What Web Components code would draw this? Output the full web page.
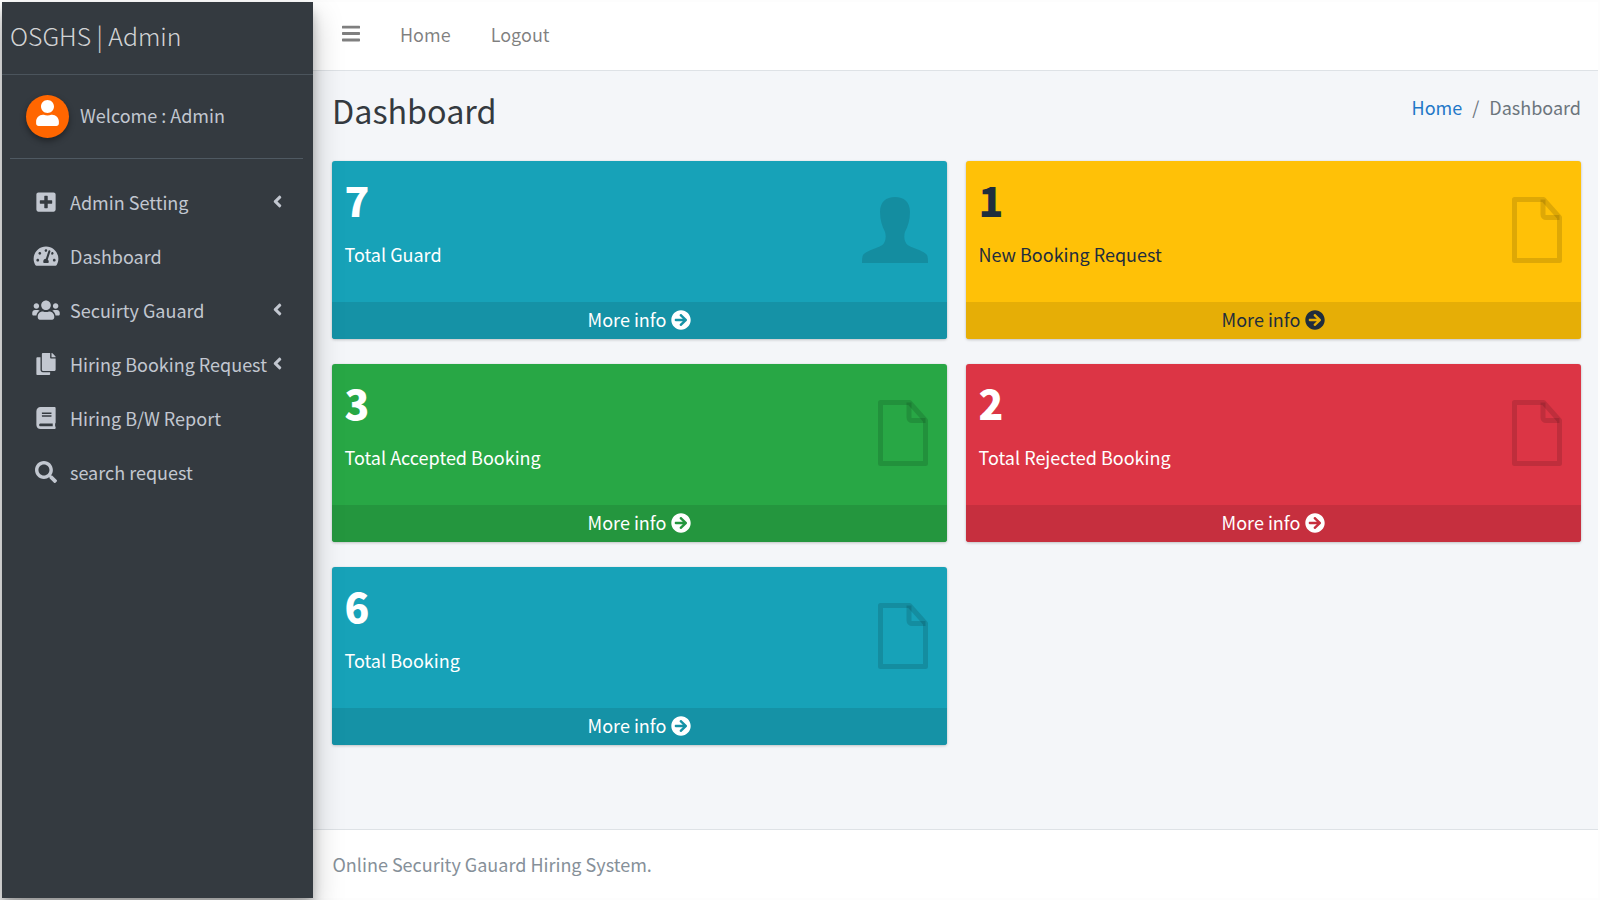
<!DOCTYPE html>
<html lang="en"><head><meta charset="utf-8"><title>OSGHS | Admin</title>
<style>
html,body{margin:0;height:100%;background:#fdfdfd;}
body{font-family:"Noto Sans CJK JP","Liberation Sans",sans-serif;overflow:hidden;}
app-shell{height:900px;}
</style></head>
<body>
<app-shell>
  <side-bar slot="side" brand="OSGHS | Admin" user="Welcome : Admin">
    <menu-item icon="plus" arrow>Admin Setting</menu-item>
    <menu-item icon="gauge">Dashboard</menu-item>
    <menu-item icon="users" arrow>Secuirty Gauard</menu-item>
    <menu-item icon="copy" arrow>Hiring Booking Request</menu-item>
    <menu-item icon="book">Hiring B/W Report</menu-item>
    <menu-item icon="search">search request</menu-item>
  </side-bar>
  <top-bar slot="top"></top-bar>
  <page-head slot="head"></page-head>
  <stat-box slot="cards" value="7" label="Total Guard" bg="#17a2b8" foot="#1592a6" glyph="person"></stat-box>
  <stat-box slot="cards" value="1" label="New Booking Request" bg="#ffc107" foot="#e6ae06" fg="#1f2d3d" glyph="doc"></stat-box>
  <stat-box slot="cards" value="3" label="Total Accepted Booking" bg="#28a745" foot="#24963e" glyph="doc"></stat-box>
  <stat-box slot="cards" value="2" label="Total Rejected Booking" bg="#dc3545" foot="#c62f3e" glyph="doc"></stat-box>
  <stat-box slot="cards" value="6" label="Total Booking" bg="#17a2b8" foot="#1592a6" glyph="doc"></stat-box>
  <page-foot slot="foot">Online Security Gauard Hiring System.</page-foot>
</app-shell>
<script>
const P={
 plus:['0 0 448 512','M400 32H48C21.5 32 0 53.5 0 80v352c0 26.5 21.5 48 48 48h352c26.5 0 48-21.5 48-48V80c0-26.5-21.5-48-48-48zm-32 252c0 6.6-5.4 12-12 12h-92v92c0 6.6-5.4 12-12 12h-56c-6.6 0-12-5.4-12-12v-92H92c-6.6 0-12-5.4-12-12v-56c0-6.6 5.4-12 12-12h92v-92c0-6.6 5.4-12 12-12h56c6.6 0 12 5.4 12 12v92h92c6.6 0 12 5.4 12 12v56z'],
 gauge:['0 0 576 512','M288 32C128.94 32 0 160.94 0 320c0 52.8 14.25 102.26 39.06 144.8 5.61 9.62 16.3 15.2 27.44 15.2h443c11.14 0 21.83-5.58 27.44-15.2C561.75 422.26 576 372.8 576 320c0-159.06-128.94-288-288-288zm0 64c14.71 0 26.58 10.13 30.32 23.65-1.11 2.26-2.64 4.23-3.45 6.67l-9.22 27.67c-5.13 3.49-10.97 6.01-17.64 6.01-17.67 0-32-14.33-32-32S270.33 96 288 96zM96 384c-17.67 0-32-14.33-32-32s14.33-32 32-32 32 14.33 32 32-14.33 32-32 32zm48-160c-17.67 0-32-14.33-32-32s14.33-32 32-32 32 14.33 32 32-14.33 32-32 32zm246.77-72.41l-61.33 184C343.13 347.33 352 364.54 352 384c0 11.72-3.38 22.55-8.88 32H232.88c-5.5-9.45-8.88-20.28-8.88-32 0-33.94 26.5-61.43 59.9-63.59l61.34-184.01c4.17-12.56 17.73-19.45 30.36-15.17 12.57 4.19 19.35 17.79 15.17 30.36zm14.66 57.2l15.52-46.55c3.47-1.29 7.13-2.23 11.05-2.23 17.67 0 32 14.33 32 32s-14.33 32-32 32c-11.38-.01-20.89-6.28-26.57-15.22zM480 384c-17.67 0-32-14.33-32-32s14.33-32 32-32 32 14.33 32 32-14.33 32-32 32z'],
 users:['0 0 640 512','M96 224c35.3 0 64-28.7 64-64s-28.7-64-64-64-64 28.7-64 64 28.7 64 64 64zm448 0c35.3 0 64-28.7 64-64s-28.7-64-64-64-64 28.7-64 64 28.7 64 64 64zm32 32h-64c-17.6 0-33.5 7.1-45.1 18.6 40.3 22.1 68.9 62 75.1 109.4h66c17.7 0 32-14.3 32-32v-32c0-35.3-28.7-64-64-64zm-256 0c61.9 0 112-50.1 112-112S381.9 32 320 32 208 82.1 208 144s50.1 112 112 112zm76.8 32h-8.3c-20.8 10-43.9 16-68.5 16s-47.6-6-68.5-16h-8.3C179.6 288 128 339.6 128 403.2V432c0 26.5 21.5 48 48 48h288c26.5 0 48-21.5 48-48v-28.8c0-63.6-51.6-115.2-115.2-115.2zm-223.7-13.4C161.5 263.1 145.6 256 128 256H64c-35.3 0-64 28.7-64 64v32c0 17.7 14.3 32 32 32h65.9c6.3-47.4 34.9-87.3 75.2-109.4z'],
 copy:['0 0 448 512','M320 448v40c0 13.255-10.745 24-24 24H24c-13.255 0-24-10.745-24-24V120c0-13.255 10.745-24 24-24h72v296c0 30.879 25.121 56 56 56h168zm0-344V0H152c-13.255 0-24 10.745-24 24v368c0 13.255 10.745 24 24 24h272c13.255 0 24-10.745 24-24V128H344c-13.2 0-24-10.8-24-24zm120.971-31.029L375.029 7.029A24 24 0 0 0 358.059 0H352v96h96v-6.059a24 24 0 0 0-7.029-16.97z'],
 book:['0 0 448 512','M448 360V24c0-13.3-10.7-24-24-24H96C43 0 0 43 0 96v320c0 53 43 96 96 96h328c13.3 0 24-10.7 24-24v-16c0-7.5-3.5-14.3-8.9-18.7-4.2-15.4-4.2-59.3 0-74.7 5.4-4.3 8.9-11.1 8.9-18.6zM128 134c0-3.3 2.7-6 6-6h212c3.3 0 6 2.7 6 6v20c0 3.3-2.7 6-6 6H134c-3.3 0-6-2.7-6-6v-20zm0 64c0-3.3 2.7-6 6-6h212c3.3 0 6 2.7 6 6v20c0 3.3-2.7 6-6 6H134c-3.3 0-6-2.7-6-6v-20zm253.4 250H96c-17.7 0-32-14.3-32-32 0-17.6 14.4-32 32-32h285.4c-1.9 17.1-1.9 46.9 0 64z'],
 search:['0 0 512 512','M505 442.7L405.3 343c-4.5-4.5-10.6-7-17-7H372c27.6-35.3 44-79.7 44-128C416 93.1 322.9 0 208 0S0 93.1 0 208s93.1 208 208 208c48.3 0 92.7-16.4 128-44v16.3c0 6.4 2.5 12.5 7 17l99.7 99.7c9.4 9.4 24.6 9.4 33.9 0l28.3-28.3c9.4-9.4 9.4-24.6.1-34zM208 336c-70.7 0-128-57.2-128-128 0-70.7 57.2-128 128-128 70.7 0 128 57.2 128 128 0 70.7-57.2 128-128 128z'],
 left:['0 0 256 512','M31.7 239l136-136c9.4-9.4 24.6-9.4 33.9 0l22.6 22.6c9.4 9.4 9.4 24.6 0 33.9L127.9 256l96.4 96.4c9.4 9.4 9.4 24.6 0 33.9L201.7 413c-9.4 9.4-24.6 9.4-33.9 0l-136-136c-9.5-9.4-9.5-24.6-.1-34z'],
 user:['0 0 448 512','M224 256c70.7 0 128-57.3 128-128S294.7 0 224 0 96 57.3 96 128s57.3 128 128 128zm89.6 32h-16.7c-22.2 10.2-46.9 16-72.9 16s-50.6-5.8-72.9-16h-16.7C60.2 288 0 348.2 0 422.4V464c0 26.5 21.5 48 48 48h352c26.5 0 48-21.5 48-48v-41.6c0-74.2-60.2-134.4-134.4-134.4z'],
 bars:['0 0 448 512','M16 132h416c8.837 0 16-7.163 16-16V76c0-8.837-7.163-16-16-16H16C7.163 60 0 67.163 0 76v40c0 8.837 7.163 16 16 16zm0 160h416c8.837 0 16-7.163 16-16v-40c0-8.837-7.163-16-16-16H16c-8.837 0-16 7.163-16 16v40c0 8.837 7.163 16 16 16zm0 160h416c8.837 0 16-7.163 16-16v-40c0-8.837-7.163-16-16-16H16c-8.837 0-16 7.163-16 16v40c0 8.837 7.163 16 16 16z'],
 arrow:['0 0 512 512','M256 8c137 0 248 111 248 248S393 504 256 504 8 393 8 256 119 8 256 8zm-28.9 143.6l75.5 72.4H120c-13.3 0-24 10.7-24 24v16c0 13.3 10.7 24 24 24h182.6l-75.5 72.4c-9.7 9.3-9.9 24.8-.4 34.3l11 10.9c9.4 9.4 24.6 9.4 33.9 0L404.3 273c9.4-9.4 9.4-24.6 0-33.9L271.6 106.3c-9.4-9.4-24.6-9.4-33.9 0l-11 10.9c-9.5 9.6-9.3 25.1.4 34.4z']
};
const svg=(n,w,h,extra='')=>`<svg viewBox="${P[n][0]}" width="${w}" height="${h}" fill="currentColor" ${extra}><path d="${P[n][1]}"/></svg>`;
class Base extends HTMLElement{
  constructor(){super();this.attachShadow({mode:'open'});}
}
customElements.define('app-shell',class extends Base{constructor(){super();this.shadowRoot.innerHTML=`<style>
:host{display:grid;grid-template-columns:311px 1fr;box-sizing:border-box;padding:2px;height:900px}
.s{display:block;position:relative;z-index:2;box-shadow:0 14px 28px rgba(0,0,0,.25),0 10px 10px rgba(0,0,0,.22)}
main{display:flex;flex-direction:column;background:#f4f6f9;min-width:0}
.c{flex:1;display:grid;grid-template-columns:615px 615px;column-gap:19px;row-gap:25px;grid-auto-rows:178px;align-content:start;padding:0 17px 0 19px}
</style><div class="s"><slot name="side"></slot></div><main><slot name="top"></slot><slot name="head"></slot><div class="c"><slot name="cards"></slot></div><slot name="foot"></slot></main>`;}});
customElements.define('side-bar',class extends Base{connectedCallback(){this.shadowRoot.innerHTML=`<style>
:host{display:block;height:100%;background:#343a40;color:#c2c7d0}
.b{height:73px;box-sizing:border-box;border-bottom:1px solid #4b545c;padding:0 8px 5px;display:flex;align-items:center;font-size:24.8px;font-weight:300;color:rgba(255,255,255,.8);line-height:1}
.u{margin:0 10px 0 8px;height:84px;box-sizing:border-box;border-bottom:1px solid #4f5962;display:flex;align-items:center;padding-left:16px;gap:11px;font-size:18px}
.a{width:43px;height:43px;border-radius:50%;background:#ff6600;color:#fff;display:flex;align-items:flex-start;justify-content:center;padding-top:5px;box-sizing:border-box;box-shadow:0 3px 6px rgba(0,0,0,.4)}
.n{padding-bottom:3px}
nav{padding-top:16px;display:block}
</style><div class="b">${this.getAttribute('brand')}</div><div class="u"><span class="a">${svg('user',23,26)}</span><span class="n">${this.getAttribute('user')}</span></div><nav><slot></slot></nav>`;}});
customElements.define('menu-item',class extends Base{connectedCallback(){const i=this.getAttribute('icon');const w={gauge:26,users:28,plus:20,copy:20,book:20,search:22}[i];this.shadowRoot.innerHTML=`<style>
:host{display:flex;align-items:center;height:54px;position:relative;font-size:18px;color:#c2c7d0}
.i{width:68px;box-sizing:border-box;display:flex;justify-content:center;padding-left:20px;flex:none}
.t{white-space:nowrap;line-height:1;padding-bottom:1px}
.r{position:absolute;left:270px;top:0;height:100%;display:flex;align-items:center;padding-bottom:2px;box-sizing:border-box}
</style><span class="i">${svg(i,w,22)}</span><span class="t"><slot></slot></span>${this.hasAttribute('arrow')?`<span class="r">${svg('left',11,19)}</span>`:''}`;}});
customElements.define('top-bar',class extends Base{constructor(){super();this.shadowRoot.innerHTML=`<style>
:host{display:flex;align-items:center;height:69px;box-sizing:border-box;background:#fff;border-bottom:1px solid #dee2e6;color:rgba(0,0,0,.5);font-size:18px;padding-left:29px}
svg{display:block;margin:0 40px 5px 0}span{margin-right:40px;padding-bottom:4px}
</style>${svg('bars',18,21)}<span>Home</span><span>Logout</span>`;}});
customElements.define('page-head',class extends Base{constructor(){super();this.shadowRoot.innerHTML=`<style>
:host{display:flex;justify-content:space-between;align-items:center;height:90px;box-sizing:border-box;padding:0 17px 0 19px;color:#343a40}
h1{margin:0;font-size:32.3px;font-weight:400;line-height:1;margin-top:-12px}
.c{font-size:18px;color:#6c757d;display:flex;gap:10px;margin-top:-18px}
a{color:#1f78c8;text-decoration:none}
</style><h1>Dashboard</h1><div class="c"><a>Home</a><span>/</span><span>Dashboard</span></div>`;}});
customElements.define('stat-box',class extends Base{connectedCallback(){const a=n=>this.getAttribute(n);const fg=a('fg')||'#fff';
const glyph=a('glyph')==='person'
?`<svg viewBox="0 0 66 66" width="66" height="66"><path fill="rgba(0,0,0,.13)" d="M33 0c-9 0-15 5-15 15 0 8 2 14 5 20 1 3 1 8-1 11-1 2-3 3-8 5-5 2-11 4-13 7-1 2-1 5-1 8h66c0-3 0-6-1-8-2-3-8-5-13-7-5-2-7-3-8-5-2-3-2-8-1-11 3-6 5-12 5-20 0-10-6-15-15-15z"/></svg>`
:`<svg viewBox="0 0 50 66" width="50" height="66" fill="none" stroke="rgba(0,0,0,.13)" stroke-width="5" stroke-linejoin="round"><path d="M2.500 2.500h29l16 18v43h-45z"/><path d="M31 2.500v15a3 3 0 0 0 3 3h13.500"/></svg>`;
this.shadowRoot.innerHTML=`<style>
:host{display:flex;flex-direction:column;background:${a('bg')};color:${fg};border-radius:3px;box-shadow:0 0 1px rgba(0,0,0,.125),0 1px 3px rgba(0,0,0,.2);overflow:hidden;position:relative}
.in{flex:1;padding:14px 13px 0 12.500px}
.v{font-size:40.8px;font-weight:900;line-height:50px;height:50px}
.l{font-size:18px;line-height:26px;margin-top:15.500px}
.g{position:absolute;right:19px;top:36px;display:block}
.f{height:37px;background:${a('foot')};display:flex;align-items:center;justify-content:center;gap:5px;font-size:18px;color:${fg};padding-bottom:1px;box-sizing:border-box}
.f span{position:relative;top:-1px}
svg{display:block}
</style><div class="in"><div class="v">${a('value')}</div><div class="l">${a('label')}</div></div><span class="g">${glyph}</span><div class="f"><span>More info</span>${svg('arrow',20,20)}</div>`;}});
customElements.define('page-foot',class extends Base{constructor(){super();this.shadowRoot.innerHTML=`<style>
:host{display:flex;align-items:center;height:69px;box-sizing:border-box;background:#fff;border-top:1px solid #dee2e6;padding:0 0 0 19.500px;color:#869099;font-size:18px}
</style><slot></slot>`;}});
</script>
</body></html>
